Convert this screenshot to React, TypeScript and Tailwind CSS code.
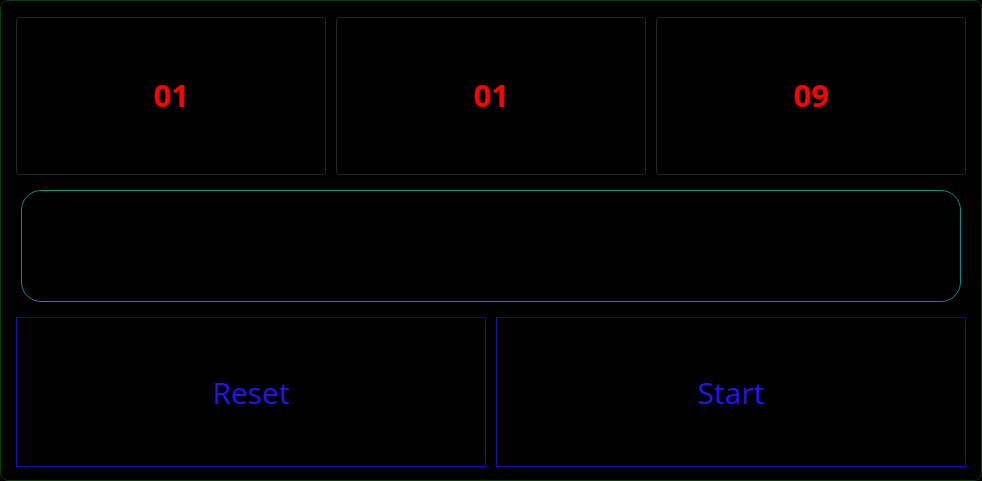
import React from 'react';

const values = ['01', '01', '09'];

const App = () => {
  return (
    <div className="w-[982px] h-[481px] bg-black">
      <div className="w-full h-full flex flex-col gap-[15px] rounded-lg border border-[#0b3d0b] bg-black pt-4 px-[15px] pb-[13px] font-['Open_Sans',sans-serif]">
        <div className="grid grid-cols-3 gap-[10px] h-[158px]">
          {values.map((v, i) => (
            <div
              key={i}
              className="flex items-center justify-center rounded-[3px] border border-[#262626] bg-black"
            >
              <span className="text-[31px] font-bold text-[#ff0000] leading-none">{v}</span>
            </div>
          ))}
        </div>

        <div className="mx-[5px] h-[113px] rounded-[20px] border border-[#0c8f8f] bg-black" />

        <div className="grid grid-cols-2 gap-[10px] h-[150px]">
          {['Reset', 'Start'].map((label) => (
            <button
              key={label}
              className="flex items-center justify-center border border-t-[#151070] border-r-[#191385] border-b-[#1a0cc4] border-l-[#1a0cb4] bg-black text-[30px] text-[#2a12f2]"
            >
              {label}
            </button>
          ))}
        </div>
      </div>
    </div>
  );
};

export default App;
